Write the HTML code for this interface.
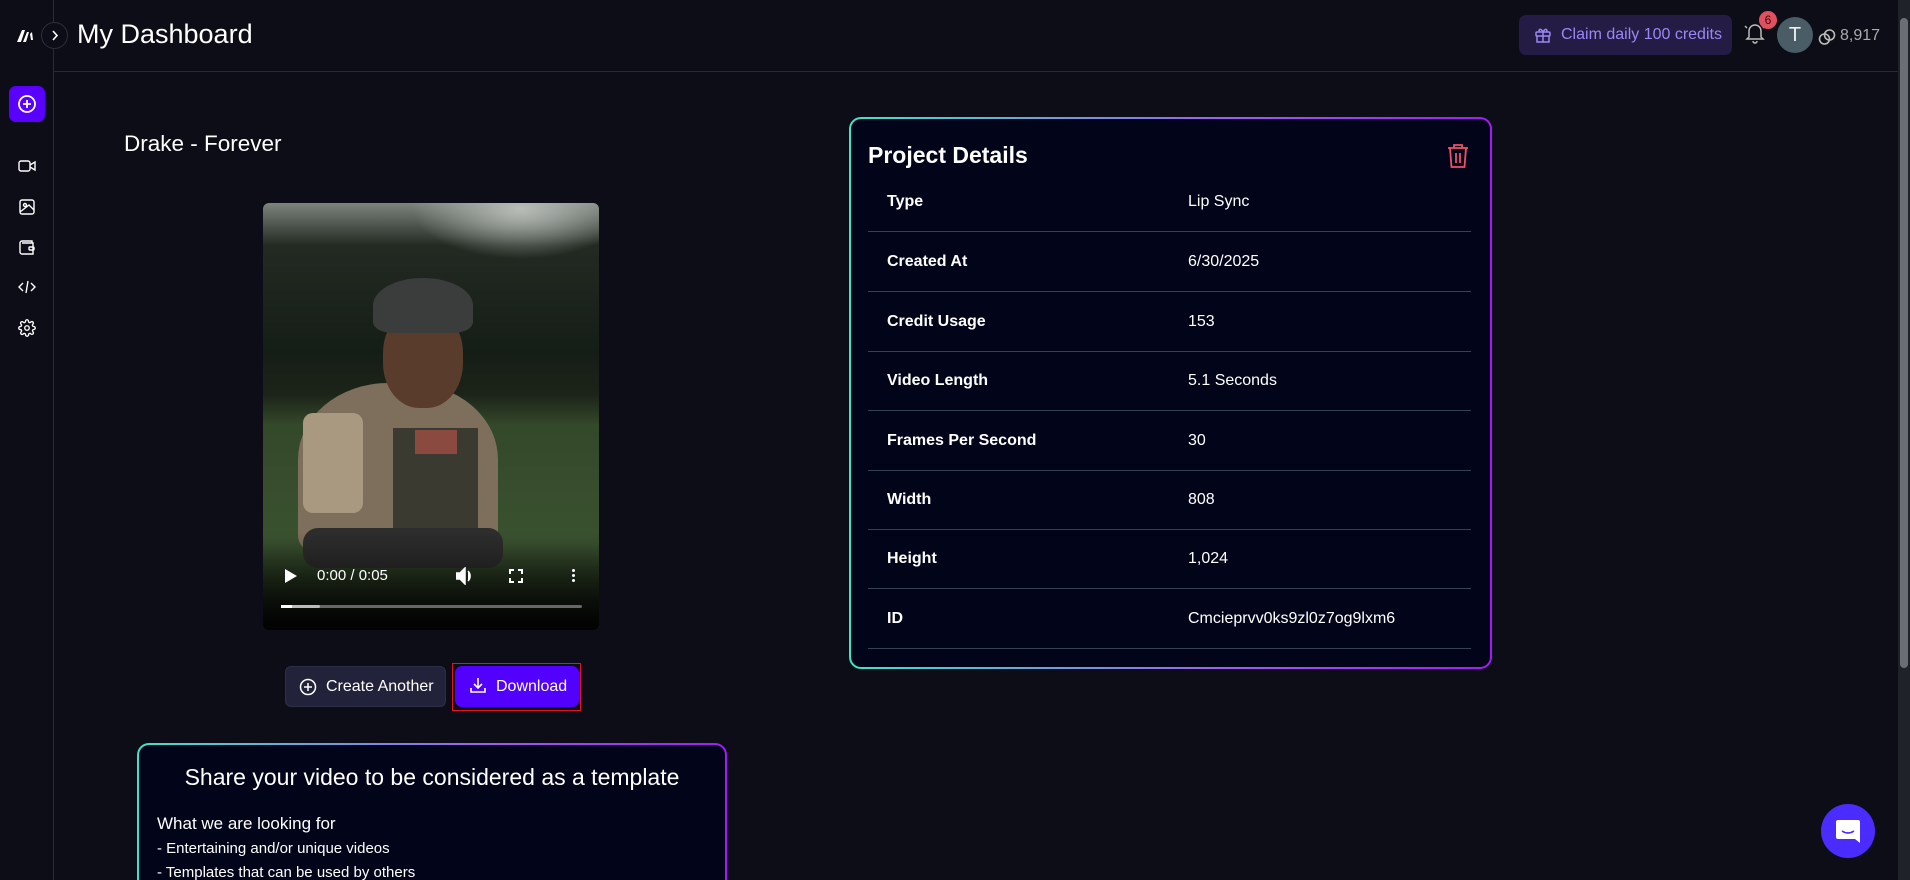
<!DOCTYPE html>
<html style="overflow:hidden;height:880px"><head><meta charset="utf-8"><style>
*{margin:0;padding:0;box-sizing:border-box}
html,body{width:1910px;height:880px;overflow:hidden}
body{background:#0c0d16;font-family:"Liberation Sans",Arial,sans-serif;color:#fff}
#w{position:relative;width:1910px;height:880px;overflow:hidden}
.abs{position:absolute}
.side{left:0;top:0;width:54px;height:880px;border-right:1px solid #2a2b3a;background:#0c0d16}
.hline{left:54px;top:71px;width:1844px;height:1px;background:#2a2b3a}
.row{position:absolute;left:868px;width:603px;height:60px;border-bottom:1px solid #364152;font-size:16px}
.row b{position:absolute;left:19px;top:50%;transform:translateY(-50%)}
.row span{position:absolute;left:320px;top:50%;transform:translateY(-50%)}
.gb{border-radius:12px;padding:2px;background:linear-gradient(90deg,#3ee6c6,#9d5cf0 60%,#a21cf4)}
.gb>div{background:#02051a;border-radius:10px;width:100%;height:100%}
</style></head><body><div id="w">
<div class="abs side"></div>
<div class="abs hline"></div>
<svg class="abs" style="left:16px;top:28px" width="20" height="16" viewBox="0 0 20 16"><path d="M1 14 L6 2 L9 2 L5 14Z M7 14 L11 4 L13 4 L10 14Z M14 6 L16 4 L17 12 L15 12Z" fill="#fff"/></svg>
<div class="abs" style="left:41px;top:22px;width:27px;height:27px;border:1px solid #2e2f3d;border-radius:50%;background:#0c0d16"></div>
<svg class="abs" style="left:49px;top:29px" width="12" height="13" viewBox="0 0 12 13"><path d="M4 2 L8 6.5 L4 11" stroke="#fff" stroke-width="1.6" fill="none"/></svg>
<div class="abs" style="left:77px;top:19px;font-size:27px;">My Dashboard</div>
<div class="abs" style="left:9px;top:86px;width:36px;height:36px;border-radius:7px;background:#5a00ff"></div>
<svg class="abs" style="left:17px;top:94px" width="20" height="20" viewBox="0 0 20 20"><circle cx="10" cy="10" r="8" stroke="#fff" stroke-width="1.8" fill="none"/><path d="M10 6v8M6 10h8" stroke="#fff" stroke-width="1.8"/></svg>
<svg class="abs" style="left:18px;top:157px" width="18" height="18" viewBox="0 0 18 18" fill="none" stroke="#fff" stroke-width="1.4"><rect x="1" y="4" width="11" height="10" rx="2"/><path d="M12 8l5-3v8l-5-3"/></svg>
<svg class="abs" style="left:18px;top:198px" width="18" height="18" viewBox="0 0 18 18" fill="none" stroke="#fff" stroke-width="1.4"><rect x="2" y="2" width="14" height="14" rx="2"/><circle cx="7" cy="7" r="1.5"/><path d="M2 14l9-7 5 5"/></svg>
<svg class="abs" style="left:18px;top:238px" width="18" height="18" viewBox="0 0 18 18" fill="none" stroke="#fff" stroke-width="1.4"><path d="M14 5V3H4a2 2 0 0 0-2 2v9a2 2 0 0 0 2 2h11V5H4"/><rect x="11" y="9" width="5" height="3" rx="1"/></svg>
<svg class="abs" style="left:18px;top:278px" width="18" height="18" viewBox="0 0 18 18" fill="none" stroke="#fff" stroke-width="1.4"><path d="M5 5L1 9l4 4M13 5l4 4-4 4M10 3L8 15"/></svg>
<svg class="abs" style="left:18px;top:319px" width="18" height="18" viewBox="0 0 24 24" fill="none" stroke="#fff" stroke-width="1.8"><circle cx="12" cy="12" r="3"/><path d="M19.4 15a1.7 1.7 0 0 0 .3 1.8l.1.1a2 2 0 1 1-2.8 2.8l-.1-.1a1.7 1.7 0 0 0-1.8-.3 1.7 1.7 0 0 0-1 1.5V21a2 2 0 1 1-4 0v-.1a1.7 1.7 0 0 0-1.1-1.5 1.7 1.7 0 0 0-1.8.3l-.1.1a2 2 0 1 1-2.8-2.8l.1-.1a1.7 1.7 0 0 0 .3-1.8 1.7 1.7 0 0 0-1.5-1H3a2 2 0 1 1 0-4h.1a1.7 1.7 0 0 0 1.5-1.1 1.7 1.7 0 0 0-.3-1.8l-.1-.1a2 2 0 1 1 2.8-2.8l.1.1a1.7 1.7 0 0 0 1.8.3H9a1.7 1.7 0 0 0 1-1.5V3a2 2 0 1 1 4 0v.1a1.7 1.7 0 0 0 1 1.5 1.7 1.7 0 0 0 1.8-.3l.1-.1a2 2 0 1 1 2.8 2.8l-.1.1a1.7 1.7 0 0 0-.3 1.8V9a1.7 1.7 0 0 0 1.5 1H21a2 2 0 1 1 0 4h-.1a1.7 1.7 0 0 0-1.5 1z"/></svg>
<div class="abs" style="left:1519px;top:15px;width:213px;height:40px;border-radius:7px;background:#241c45;color:#9b87f5;font-size:16px;line-height:40px;padding-left:42px">Claim daily 100 credits</div>
<svg class="abs" style="left:1534px;top:26px" width="18" height="18" viewBox="0 0 18 18" fill="none" stroke="#9b87f5" stroke-width="1.5"><rect x="2" y="6" width="14" height="4" rx="1"/><path d="M3 10v6h12v-6M9 6v10M9 6C7 2 4 3 5.5 6M9 6c2-4 5-3 3.5 0"/></svg>
<svg class="abs" style="left:1742px;top:20px" width="26" height="26" viewBox="0 0 26 26" fill="none" stroke="#bbb" stroke-width="1.5"><path d="M7 17V11a6 6 0 0 1 12 0v6l2 2H5z"/><path d="M11 21a2 2 0 0 0 4 0M3 6l2 2M23 6l-2 2"/></svg>
<div class="abs" style="left:1759px;top:11px;width:18px;height:18px;border-radius:50%;background:#e0505f;color:#3a0a10;font-size:12px;text-align:center;line-height:18px">6</div>
<div class="abs" style="left:1777px;top:17px;width:36px;height:36px;border-radius:50%;background:#4a5d66;font-size:20px;text-align:center;line-height:36px;color:#eee">T</div>
<svg class="abs" style="left:1817px;top:27px" width="20" height="20" viewBox="0 0 20 20" fill="none" stroke="#bbb" stroke-width="1.6"><circle cx="7.5" cy="12" r="5"/><circle cx="12.5" cy="8" r="5"/></svg>
<div class="abs" style="left:1840px;top:27px;font-size:16px;color:#aaa">8,917</div>
<div class="abs" style="left:1898px;top:0;width:12px;height:880px;background:#1f2329"></div>
<div class="abs" style="left:1900px;top:18px;width:8px;height:650px;border-radius:4px;background:#6b6f75"></div>
<div class="abs" style="left:124px;top:131px;font-size:22.5px">Drake - Forever</div>
<div class="abs" style="left:263px;top:203px;width:336px;height:427px;border-radius:6px;overflow:hidden;background:linear-gradient(180deg,#7d847e 0%,#222a22 10%,#151d17 35%,#1c2419 45%,#34482a 52%,#3a5230 80%,#0b0d09 100%)">
 <div class="abs" style="left:140px;top:0;width:196px;height:60px;background:radial-gradient(ellipse at 60% 10%,#b8bdb8,transparent 65%)"></div>
 <div class="abs" style="left:35px;top:180px;width:200px;height:170px;border-radius:45% 45% 10% 10%;background:#7d6f5c"></div>
 <div class="abs" style="left:40px;top:210px;width:60px;height:100px;border-radius:10px;background:#a89980"></div>
 <div class="abs" style="left:130px;top:225px;width:85px;height:105px;background:#3a3a30"></div>
 <div class="abs" style="left:152px;top:227px;width:42px;height:24px;background:#8a4a40"></div>
 <div class="abs" style="left:120px;top:105px;width:80px;height:100px;border-radius:45%;background:#5a3c2c"></div>
 <div class="abs" style="left:110px;top:75px;width:100px;height:55px;border-radius:50% 50% 20% 20%;background:#3a3d3c"></div>
 <div class="abs" style="left:40px;top:325px;width:200px;height:40px;border-radius:15px;background:#2d2d2d"></div>
 <div class="abs" style="left:0;top:330px;width:336px;height:97px;background:linear-gradient(180deg,transparent,rgba(0,0,0,.85))"></div>
 <svg class="abs" style="left:22px;top:366px" width="12" height="14"><path d="M0 0L12 7L0 14Z" fill="#fff"/></svg>
 <div class="abs" style="left:54px;top:364px;font-size:15px">0:00 / 0:05</div>
 <svg class="abs" style="left:193px;top:364px" width="20" height="18"><path d="M0 6h4l5-5v16l-5-5H0z M12 4a7 7 0 0 1 0 10" fill="#fff" stroke="#fff" stroke-width="1.5"/></svg>
 <svg class="abs" style="left:246px;top:366px" width="14" height="14" fill="none" stroke="#fff" stroke-width="2"><path d="M1 5V1h4M9 1h4v4M13 9v4H9M5 13H1V9"/></svg>
 <div class="abs" style="left:309px;top:366px;width:3px;height:3px;background:#fff;border-radius:50%;box-shadow:0 5px 0 #fff,0 10px 0 #fff"></div>
 <div class="abs" style="left:18px;top:402px;width:301px;height:3px;background:#666;border-radius:2px"></div>
 <div class="abs" style="left:18px;top:402px;width:39px;height:3px;background:#bbb;border-radius:2px"></div>
 <div class="abs" style="left:18px;top:402px;width:11px;height:3px;background:#fff"></div>
</div>
<div class="abs" style="left:285px;top:666px;width:161px;height:41px;border-radius:6px;background:#22233a;border:1px solid #2e2f46;font-size:16px;line-height:39px;padding-left:40px;white-space:nowrap">Create Another</div>
<svg class="abs" style="left:298px;top:677px" width="20" height="20" viewBox="0 0 20 20"><circle cx="10" cy="10" r="7.5" stroke="#fff" stroke-width="1.5" fill="none"/><path d="M10 6v8M6 10h8" stroke="#fff" stroke-width="1.5"/></svg>
<div class="abs" style="left:452px;top:663px;width:129px;height:48px;border:1px solid #e0151f"></div>
<div class="abs" style="left:455px;top:666px;width:124px;height:41px;border-radius:7px;background:#5200ff;font-size:16px;line-height:41px;padding-left:41px">Download</div>
<svg class="abs" style="left:469px;top:676px" width="18" height="18" viewBox="0 0 18 18" fill="none" stroke="#fff" stroke-width="1.6"><path d="M9 2v10M5 8l4 4 4-4M2 12v4h14v-4"/></svg>
<div class="abs gb" style="left:137px;top:743px;width:590px;height:220px"><div></div></div>
<div class="abs" style="left:137px;top:764px;width:590px;text-align:center;font-size:23px">Share your video to be considered as a template</div>
<div class="abs" style="left:157px;top:814px;font-size:17px">What we are looking for</div>
<div class="abs" style="left:157px;top:840px;font-size:15px">- Entertaining and/or unique videos</div>
<div class="abs" style="left:157px;top:864px;font-size:15px">- Templates that can be used by others</div>
<div class="abs gb" style="left:849px;top:117px;width:643px;height:552px"><div></div></div>
<div class="abs" style="left:868px;top:142px;font-size:23px;font-weight:bold">Project Details</div>
<svg class="abs" style="left:1446px;top:143px" width="24" height="26" viewBox="0 0 24 26" fill="none" stroke="#f0506a" stroke-width="1.8"><path d="M2 5h20M8 5V2h8v3M4 5l1.5 19h13L20 5M10 10v10M14 10v10"/></svg>
<div class="row" style="top:172px"><b>Type</b><span>Lip Sync</span></div>
<div class="row" style="top:232px"><b>Created At</b><span>6/30/2025</span></div>
<div class="row" style="top:292px"><b>Credit Usage</b><span>153</span></div>
<div class="row" style="top:351px"><b>Video Length</b><span>5.1 Seconds</span></div>
<div class="row" style="top:411px"><b>Frames Per Second</b><span>30</span></div>
<div class="row" style="top:470px"><b>Width</b><span>808</span></div>
<div class="row" style="top:529px"><b>Height</b><span>1,024</span></div>
<div class="row" style="top:589px"><b>ID</b><span>Cmcieprvv0ks9zl0z7og9lxm6</span></div>
<div class="abs" style="left:1821px;top:804px;width:54px;height:54px;border-radius:50%;background:#4a2cff"></div>
<svg class="abs" style="left:1834px;top:817px" width="28" height="28" viewBox="0 0 28 28"><path d="M4 3h20a2 2 0 0 1 2 2v21l-5-4H4a2 2 0 0 1-2-2V5a2 2 0 0 1 2-2z" fill="#fff"/><path d="M8 14q6 4 12 0" stroke="#4a2cff" stroke-width="1.6" fill="none"/></svg>
</div></body></html>
